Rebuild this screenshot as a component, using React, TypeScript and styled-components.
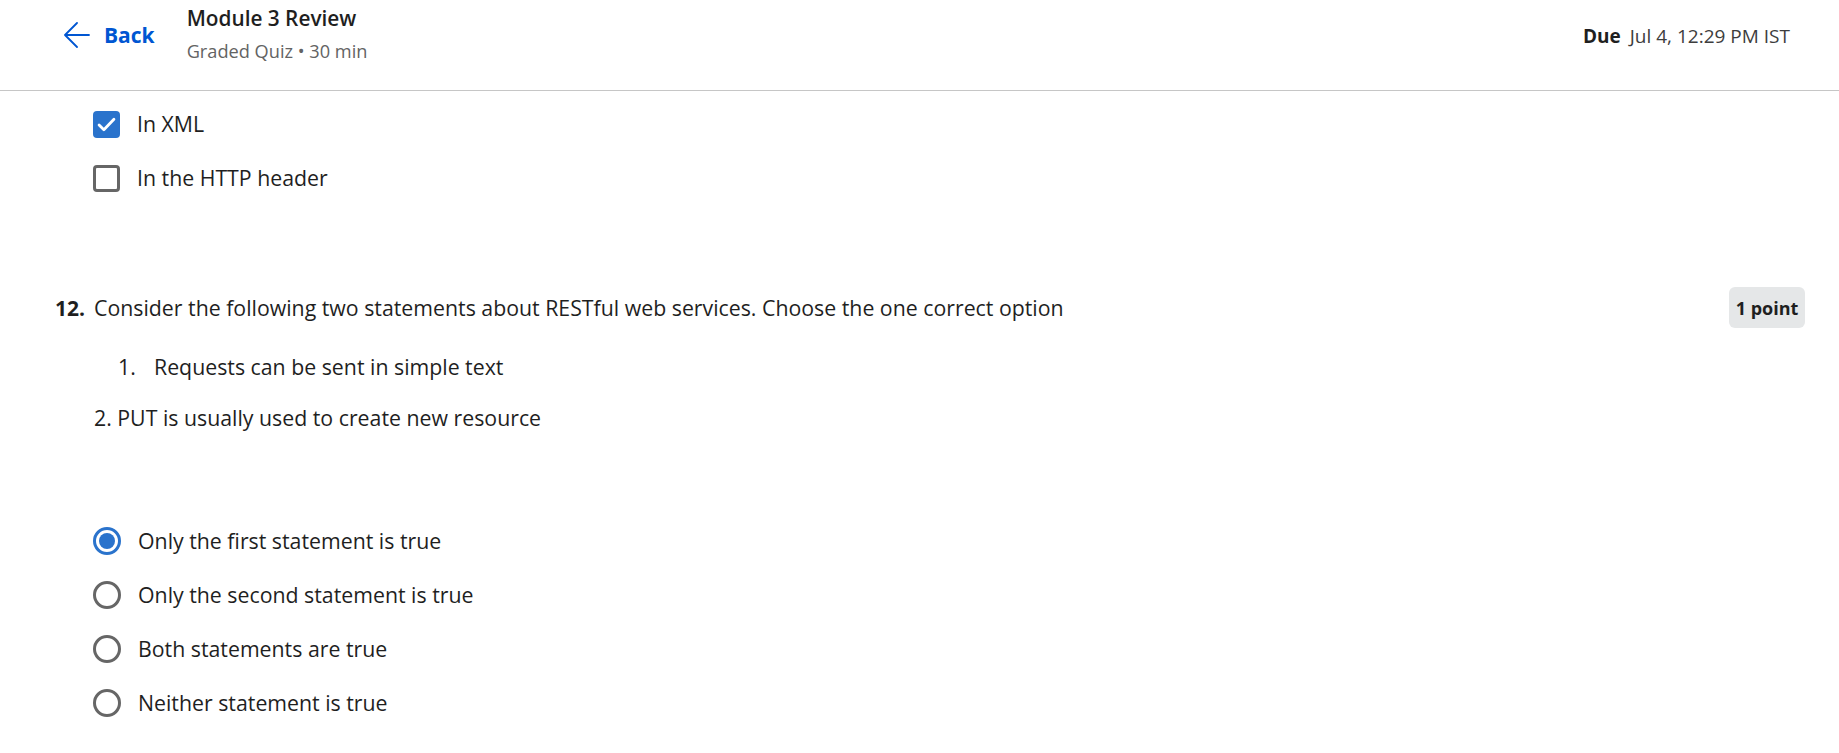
import React from "react";
import styled, { createGlobalStyle } from "styled-components";

const GlobalStyle = createGlobalStyle`
  html, body { margin: 0; padding: 0; background: #fff; }
  body {
    font-family: "Open Sans", "Noto Sans", Arial, sans-serif;
    color: #1f1f1f;
  }
  * { box-sizing: border-box; }
`;

const Header = styled.header`
  display: flex;
  align-items: flex-start;
  height: 91px;
  border-bottom: 1px solid #c6c6c6;
  padding: 0 49px 0 64px;
`;

const BackLink = styled.a`
  display: flex;
  align-items: center;
  gap: 14px;
  margin-top: 21px;
  height: 28px;
  line-height: 28px;
  color: #0056d2;
  font-weight: 700;
  font-size: 21px;
  text-decoration: none;
  cursor: pointer;
`;

const TitleBlock = styled.div`
  display: flex;
  flex-direction: column;
  margin-left: 32px;
  padding-top: 5px;
`;

const Title = styled.div`
  font-size: 20.8px;
  font-weight: 600;
  line-height: 26px;
  color: #1f1f1f;
`;

const Subtitle = styled.div`
  font-size: 18.2px;
  line-height: 22px;
  margin-top: 9px;
  color: #636363;
`;

const Due = styled.div`
  margin-left: auto;
  margin-top: 24px;
  font-size: 19px;
  line-height: 24px;
  color: #3d3d3d;
  display: flex;
  gap: 9px;
`;

const DueLabel = styled.span`
  font-weight: 700;
  color: #1f1f1f;
`;

const Main = styled.main`
  padding: 6px 34px 0 55px;
`;

const OptionList = styled.div<{ $mt?: number }>`
  display: flex;
  flex-direction: column;
  padding-left: 38px;
  margin-top: ${(p) => p.$mt ?? 0}px;
`;

const OptionRow = styled.label`
  display: flex;
  align-items: center;
  gap: 17px;
  height: 54px;
  font-size: 21.3px;
  line-height: 28px;
  color: #1f1f1f;
  cursor: pointer;
`;

const CheckBox = styled.span<{ $checked?: boolean }>`
  width: 27px;
  height: 27px;
  border-radius: 4px;
  flex-shrink: 0;
  display: flex;
  align-items: center;
  justify-content: center;
  background: ${(p) => (p.$checked ? "#2a73cc" : "#fff")};
  border: ${(p) => (p.$checked ? "none" : "3px solid #666")};
`;

const Radio = styled.span<{ $checked?: boolean }>`
  width: 28px;
  height: 28px;
  border-radius: 50%;
  flex-shrink: 0;
  display: flex;
  align-items: center;
  justify-content: center;
  border: 3px solid ${(p) => (p.$checked ? "#2a73cc" : "#666")};
  &::after {
    content: "";
    display: ${(p) => (p.$checked ? "block" : "none")};
    width: 16px;
    height: 16px;
    border-radius: 50%;
    background: #2a73cc;
  }
`;

const QuestionRow = styled.div`
  display: flex;
  align-items: center;
  margin-top: 82px;
  height: 41px;
`;

const QNum = styled.span`
  font-weight: 700;
  font-size: 21px;
  line-height: 28px;
  width: 39px;
  flex-shrink: 0;
`;

const QText = styled.span`
  font-size: 21.3px;
  line-height: 28px;
  flex: 1;
`;

const Badge = styled.span`
  display: flex;
  align-items: center;
  justify-content: center;
  width: 76px;
  height: 41px;
  border-radius: 6px;
  background: #e5e7e8;
  font-weight: 700;
  font-size: 18px;
  color: #1f1f1f;
`;

const Statement = styled.div<{ $indent: number; $mt: number }>`
  display: flex;
  align-items: center;
  font-size: 21.3px;
  line-height: 28px;
  height: 30px;
  padding-left: ${(p) => p.$indent}px;
  margin-top: ${(p) => p.$mt}px;
`;

const ListNum = styled.span`
  width: 36px;
`;

const CheckIcon = () => (
  <svg width="21" height="21" viewBox="0 0 24 24" fill="none">
    <path d="M3.5 12.5l5.5 5.5L20.5 6" stroke="#fff" strokeWidth="3.2" strokeLinecap="round" strokeLinejoin="round" />
  </svg>
);

const ArrowIcon = () => (
  <svg width="26" height="26" viewBox="0 0 26 26" fill="none">
    <path d="M25 13H1.5M13 1L1 13l12 12" stroke="#0056d2" strokeWidth="1.8" strokeLinecap="round" strokeLinejoin="round" />
  </svg>
);

export default function App() {
  return (
    <>
      <GlobalStyle />
      <Header>
        <BackLink>
          <ArrowIcon />
          Back
        </BackLink>
        <TitleBlock>
          <Title>Module 3 Review</Title>
          <Subtitle>Graded Quiz • 30 min</Subtitle>
        </TitleBlock>
        <Due>
          <DueLabel>Due</DueLabel>
          <span>Jul 4, 12:29 PM IST</span>
        </Due>
      </Header>
      <Main>
        <OptionList>
          <OptionRow>
            <CheckBox $checked>
              <CheckIcon />
            </CheckBox>
            In XML
          </OptionRow>
          <OptionRow>
            <CheckBox />
            In the HTTP header
          </OptionRow>
        </OptionList>
        <QuestionRow>
          <QNum>12.</QNum>
          <QText>Consider the following two statements about RESTful web services. Choose the one correct option</QText>
          <Badge>1 point</Badge>
        </QuestionRow>
        <Statement $indent={63} $mt={24}>
          <ListNum>1.</ListNum>
          Requests can be sent in simple text
        </Statement>
        <Statement $indent={39} $mt={21}>
          2. PUT is usually used to create new resource
        </Statement>
        <OptionList $mt={81}>
          <OptionRow>
            <Radio $checked />
            Only the first statement is true
          </OptionRow>
          <OptionRow>
            <Radio />
            Only the second statement is true
          </OptionRow>
          <OptionRow>
            <Radio />
            Both statements are true
          </OptionRow>
          <OptionRow>
            <Radio />
            Neither statement is true
          </OptionRow>
        </OptionList>
      </Main>
    </>
  );
}
